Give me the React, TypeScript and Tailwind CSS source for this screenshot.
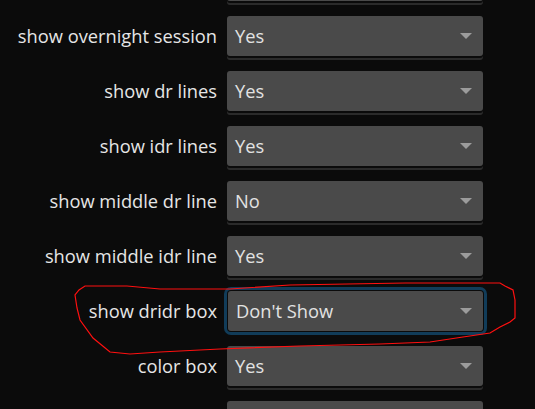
const rows = [
  { label: "", value: "" },
  { label: "show overnight session", value: "Yes" },
  { label: "show dr lines", value: "Yes" },
  { label: "show idr lines", value: "Yes" },
  { label: "show middle dr line", value: "No" },
  { label: "show middle idr line", value: "Yes" },
  { label: "show dridr box", value: "Don't Show", focused: true },
  { label: "color box", value: "Yes" },
  { label: "", value: "" },
];

function Select({ value, focused }: { value: string; focused?: boolean }) {
  return (
    <div
      className={
        focused
          ? "flex h-[40px] w-[255px] items-center justify-between rounded-[3px] bg-[#4a4a4a] pl-[8px] pr-[11px] ring-[3px] ring-[#113c59] ring-offset-1 ring-offset-[#0b0b0b]"
          : "flex h-[40px] w-[256px] items-center justify-between rounded-[3px] bg-[#4a4a4a] pl-[8px] pr-[11px] shadow-[0_2px_0_0_#0b0b0b,0_4px_0_0_#2b2b2b]"
      }
    >
      <span className="text-[#e2e2e2]">{value}</span>
      <svg width="12" height="6" viewBox="0 0 12 6">
        <path d="M0 0 L12 0 L6 6 Z" fill="#9c9c9c" />
      </svg>
    </div>
  );
}

export default function App() {
  return (
    <div className="relative h-[409px] w-[535px] overflow-hidden bg-[#0b0b0b] font-['Open_Sans',sans-serif] text-[18.3px]">
      <div className="-mt-[39px] flex flex-col gap-[15px]">
        {rows.map((r, i) => (
          <div key={i} className="flex items-center">
            <div className="w-[217px] text-right text-[#e6e6e6]">{r.label}</div>
            <div className={r.focused ? "ml-[11px]" : "ml-[10px]"}>
              <Select value={r.value} focused={r.focused} />
            </div>
          </div>
        ))}
      </div>

      {/* hand-drawn annotation */}
      <svg className="pointer-events-none absolute left-0 top-0" width="535" height="409">
        <path
          d="M85 286 L127 286 L160 289 L230 289 L290 285 L405 283 L500 283 L505 286 L513 290 L515 300 L515 318 L510 322 L500 327 L490 333 L463 337 L430 342 L380 344 L300 346 L220 349 L160 352 L130 354 L110 352 L93 338 L80 320 L77 308 L75 295 L79 290 Z"
          fill="none"
          stroke="#ff1010"
          strokeWidth="1.2"
        />
      </svg>
    </div>
  );
}
